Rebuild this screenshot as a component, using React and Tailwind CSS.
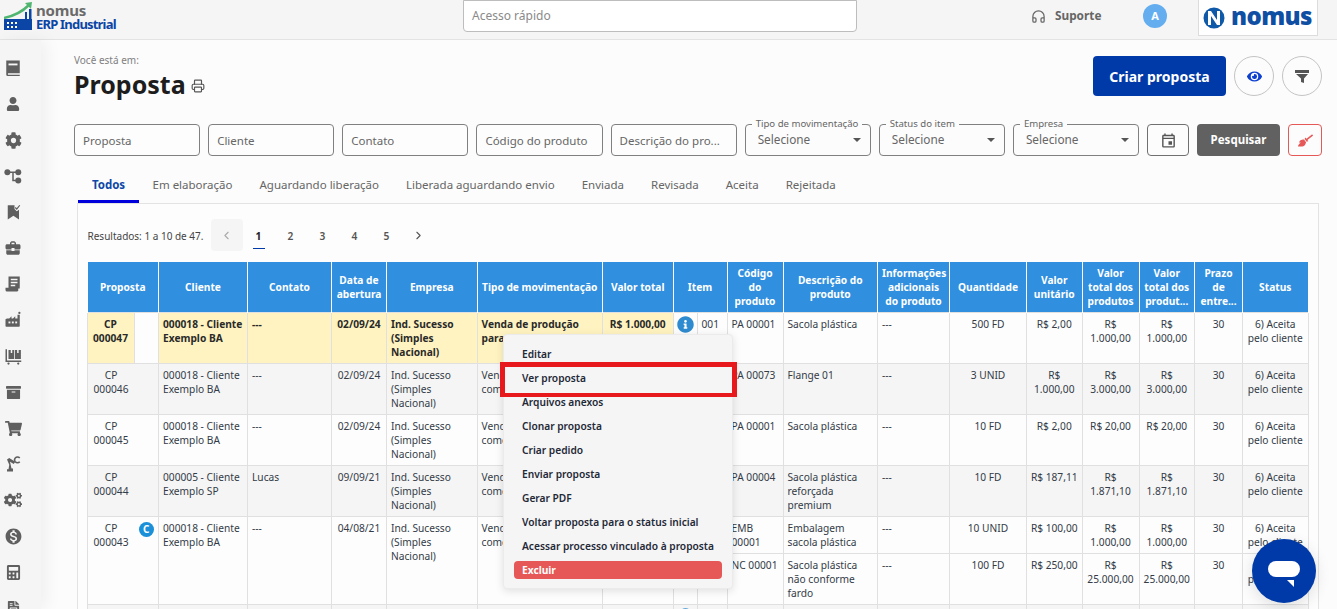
import React from "react";
import { Printer, Headphones, ChevronLeft, ChevronRight } from "lucide-react";
import { FaUser, FaCog, FaArchive, FaShoppingCart, FaCogs, FaCalculator, FaEye, FaBroom, FaInfoCircle, FaFileInvoice } from "react-icons/fa";
import { MdBusinessCenter, MdMonetizationOn, MdOutlineEvent } from "react-icons/md";

const S = ({ children, w = 18 }) => (
  <svg width={w} height={w} viewBox="0 0 24 24" fill="currentColor">{children}</svg>
);

const sideIcons = [
  <S key="book"><path d="M3 2h18v17H5.500a1.500 1.500 0 0 0 0 2H21v1.500H5a2 2 0 0 1-2-2z" /><rect x="6" y="6" width="12" height="2.500" fill="#f5f5f5" /></S>,
  <FaUser key="u" size={14} />,
  <FaCog key="c" size={17} />,
  <S key="flow"><circle cx="4.500" cy="7" r="4" /><circle cx="19" cy="7" r="4" /><circle cx="19" cy="18" r="4" /><path d="M5 6h14v2h-6v9h6v2h-8V8H5z" /></S>,
  <S key="mark"><path d="M5 3h9v5l3 3 3-2v13l-7.500-5L5 22z" /><path d="M15 6l2 2 4-5" fill="none" stroke="currentColor" strokeWidth="1.600" /></S>,
  <MdBusinessCenter key="b" size={18} />,
  <S key="sheet"><path d="M6 2h15v16h-2v3a2 2 0 0 1-2 1H4a2 2 0 0 1-2-2v-3h4zM9 5v2h9V5zm0 4v2h9V9zm0 4v2h6v-2z" fillRule="evenodd" /></S>,
  <S key="fact"><path d="M2 11l2-1h3l3-3v3h2l3-3v3h3V5h3v15a1 1 0 0 1-1 1H3a1 1 0 0 1-1-1z" /><circle cx="20.500" cy="2.500" r="1.500" /><rect x="6" y="14" width="2.500" height="2.500" fill="#f5f5f5" /><rect x="10.500" y="14" width="2.500" height="2.500" fill="#f5f5f5" /><rect x="15" y="14" width="2.500" height="2.500" fill="#f5f5f5" /></S>,
  <S key="pal"><path d="M2 3h2v15h19v2H2z" /><rect x="6" y="4" width="7.500" height="12" /><rect x="14.500" y="4" width="8" height="12" /><circle cx="6" cy="22" r="1.500" /><circle cx="19" cy="22" r="1.500" /><rect x="9" y="4" width="2" height="4" fill="#f5f5f5" /><rect x="17.500" y="4" width="2" height="4" fill="#f5f5f5" /></S>,
  <FaArchive key="a" size={15} />,
  <FaShoppingCart key="sc" size={17} />,
  <S key="rob"><path d="M4 22v-3h2l1-6-3-7 3-2 8 5-2 3-5-3 2 9h2v4z" /><path d="M21 4a4 4 0 0 0-6 0 4 4 0 0 0 0 5 4 4 0 0 0 6 0" fill="none" stroke="currentColor" strokeWidth="2" /></S>,
  <FaCogs key="cs" size={18} />,
  <MdMonetizationOn key="m" size={19} />,
  <FaCalculator key="ca" size={15} />,
  <FaFileInvoice key="fi" size={15} />,
];

const cols = [71.5, 89, 84, 55, 90.5, 125.5, 70.5, 24, 30, 56, 94.5, 72, 77, 55.5, 57, 55.5, 48, 65.5];

const heads = [
  ["Proposta"], ["Cliente"], ["Contato"], ["Data de abertura"], ["Empresa"], ["Tipo de movimentação"], ["Valor total"],
  ["Item", 2], ["Código do produto"], ["Descrição do produto"], ["Informações adicionais do produto"], ["Quantidade"],
  ["Valor unitário"], ["Valor total dos produtos"], ["Valor total dos produt..."], ["Prazo de entre..."], ["Status"],
];

const CLI = "000018 - Cliente Exemplo BA";
const EMP = "Ind. Sucesso (Simples Nacional)";
const TIPO = "Venda de produção comercial";
const ST = "6) Aceita pelo cliente";

const rows = [
  { id: "CP 000047", cli: CLI, con: "---", dt: "02/09/24", tipo: "Venda de produção para venda", tot: "R$ 1.000,00", bg: "bg-[#fff4c1]", strong: true,
    items: [["001", "PA 00001", "Sacola plástica", "500 FD", "R$ 2,00", "R$ 1.000,00", "R$ 1.000,00"]], info: true },
  { id: "CP 000046", cli: CLI, con: "---", dt: "02/09/24", tipo: TIPO, tot: "R$ 3.000,00", bg: "bg-[#f5f5f5]",
    items: [["001", "PA 00073", "Flange 01", "3 UNID", "R$ 1.000,00", "R$ 3.000,00", "R$ 3.000,00"]] },
  { id: "CP 000045", cli: CLI, con: "---", dt: "02/09/24", tipo: TIPO, tot: "R$ 20,00", bg: "bg-[#fdfdfd]",
    items: [["001", "PA 00001", "Sacola plástica", "10 FD", "R$ 2,00", "R$ 20,00", "R$ 20,00"]] },
  { id: "CP 000044", cli: "000005 - Cliente Exemplo SP", con: "Lucas", dt: "09/09/21", tipo: TIPO, tot: "R$ 1.871,10", bg: "bg-[#f5f5f5]",
    items: [["001", "PA 00004", "Sacola plástica reforçada premium", "10 FD", "R$ 187,11", "R$ 1.871,10", "R$ 1.871,10"]] },
  { id: "CP 000043", cli: CLI, con: "---", dt: "04/08/21", tipo: TIPO, tot: "R$ 26.000,00", bg: "bg-[#fdfdfd]", badge: true,
    items: [
      ["001", "EMB 00001", "Embalagem sacola plástica", "10 UNID", "R$ 100,00", "R$ 1.000,00", "R$ 1.000,00"],
      ["002", "NC 00001", "Sacola plástica não conforme fardo", "100 FD", "R$ 250,00", "R$ 25.000,00", "R$ 25.000,00"],
    ] },
  { id: "CP 000042", cli: CLI, con: "---", dt: "04/08/21", tipo: TIPO, tot: "R$ 1.000,00", bg: "bg-[#f5f5f5]", info: true,
    items: [["001", "PA 00001", "Sacola plástica", "10 FD", "R$ 100,00", "R$ 1.000,00", "R$ 1.000,00"]] },
];

const cell = "border border-[#e0e0e0] align-top pt-[4px] pb-[3px] overflow-hidden";
const td = `${cell} pl-[4px] pr-[2px]`;
const tdc = `${cell} px-[5px]`;
const tdn = `${cell} px-[4px]`;
const tdw = `${cell} px-[2px]`;

function Row({ r }) {
  const fw = r.strong ? "font-bold text-[#2a2a2a]" : "";
  const span = r.items.length;
  const ib = r.strong ? "bg-[#fdfdfd]" : r.bg;
  const itemCells = (it, k) => (
    <React.Fragment key={k}>
      <td className={`border border-[#e0e0e0] align-top text-center pt-[3px] px-0 ${ib}`}>
        {r.info && k === 0 && <FaInfoCircle size={17} className="inline text-[#2e8bcf]" />}
      </td>
      <td className={`${tdn} ${ib}`}>{it[0]}</td>
      <td className={`${tdn} ${ib}`}>{it[1]}</td>
      <td className={`${tdn} ${ib}`}>{it[2]}</td>
      <td className={`${tdn} ${ib}`}>---</td>
      <td className={`${tdc} ${ib} text-center`}>{it[3]}</td>
      <td className={`${tdw} ${ib} text-center`}>{it[4]}</td>
      <td className={`${tdw} ${ib} text-center`}>{it[5]}</td>
      <td className={`${tdw} ${ib} text-center`}>{it[6]}</td>
      <td className={`${tdc} ${ib} text-center`}>30</td>
      <td className={`${tdw} ${ib} text-center`}>{ST}</td>
    </React.Fragment>
  );
  return (
    <>
      <tr className={r.items.length > 1 ? "h-[37px]" : "h-[51px]"}>
        <td rowSpan={span} className={`border border-[#e0e0e0] align-top p-0 ${ib} ${fw}`}>
          <div className="flex">
            <div className={`w-[47px] shrink-0 text-center pt-[4px] h-[50px] ${r.strong ? `${r.bg} border-r border-[#e0e0e0]` : ""}`}>{r.id}</div>
            {r.badge && (
              <div className="flex-1 flex justify-center pt-[5px]">
                <span className="w-[15px] h-[15px] rounded-full bg-[#1b8fd8] text-white font-bold text-[10px] leading-[15px] text-center">C</span>
              </div>
            )}
          </div>
        </td>
        <td rowSpan={span} className={`${td} ${r.bg} ${fw}`}>{r.cli}</td>
        <td rowSpan={span} className={`${td} ${r.bg} ${fw}`}>{r.con}</td>
        <td rowSpan={span} className={`${tdc} ${r.bg} ${fw} text-center`}>{r.dt}</td>
        <td rowSpan={span} className={`${tdn} ${r.bg} ${fw}`}>{EMP}</td>
        <td rowSpan={span} className={`${tdn} ${r.bg} ${fw}`}>{r.tipo}</td>
        <td rowSpan={span} className={`${tdw} ${r.bg} ${fw} text-center`}>{r.tot}</td>
        {itemCells(r.items[0], 0)}
      </tr>
      {r.items.slice(1).map((it, i) => (
        <tr key={i} className="h-[51px]">{itemCells(it, i + 1)}</tr>
      ))}
    </>
  );
}

const TextField = ({ label }) => (
  <div className="w-[126.125px] h-[32px] shrink-0 border border-[#808080] rounded-[4px] bg-[#fdfdfd] flex items-center px-[8px] pt-[1px] text-[11.500px] text-[#666] whitespace-nowrap overflow-hidden">
    {label}
  </div>
);

const SelectField = ({ label }) => (
  <div className="relative w-[126.125px] h-[32px] shrink-0 border border-[#808080] rounded-[4px] flex items-center pl-[12px] pr-[8px] text-[11.800px] text-[#666]">
    <span className="absolute left-[6px] -top-[7px] bg-[#fcfcfc] px-[4px] text-[9.600px] leading-[12px] whitespace-nowrap text-[#666]">{label}</span>
    <span className="flex-1 -mt-[1px]">Selecione</span>
    <span className="w-0 h-0 border-x-[4px] border-x-transparent border-t-[4px] border-t-[#555] mr-[1px]" />
  </div>
);

const tabs = ["Em elaboração", "Aguardando liberação", "Liberada aguardando envio", "Enviada", "Revisada", "Aceita", "Rejeitada"];

const menu = ["Editar", "Ver proposta", "Arquivos anexos", "Clonar proposta", "Criar pedido", "Enviar proposta", "Gerar PDF", "Voltar proposta para o status inicial", "Acessar processo vinculado à proposta"];

export default function App() {
  return (
    <div className="relative h-[609px] w-[1337px] overflow-hidden bg-[#fcfcfc] font-['Open_Sans',sans-serif] text-[#333b47]">
      <header className="h-[40px] flex items-start bg-[#f5f5f5] border-b border-[#e3e3e3]">
        <div className="w-[463px] h-[39px] flex items-start pl-[4px] pt-[2px]">
          <svg width="28" height="28" viewBox="0 0 28 28" className="shrink-0">
            <path d="M0 17h28v11H0z" fill="#0b45a5" />
            <path d="M21 10h2v8h-2zM25 7h2.500v11H25z" fill="#0b45a5" />
            <path d="M0 16C10 14 18 10 25 3" fill="none" stroke="#4fb56f" strokeWidth="2.500" />
            <path d="M21 1l7-1-1 7z" fill="#4fb56f" />
            <g fill="#fff"><rect x="3" y="20" width="2" height="2" /><rect x="7" y="20" width="2" height="2" /><rect x="11" y="20" width="2" height="2" /><rect x="3" y="24" width="2" height="2" /><rect x="7" y="24" width="2" height="2" /><rect x="11" y="24" width="2" height="2" /></g>
          </svg>
          <div className="ml-[4px] leading-none">
            <div className="text-[15px] leading-[13px] pt-[2px] font-bold text-[#6a6a6a] tracking-[-0.2px]">nomus</div>
            <div className="text-[13px] leading-[15px] font-bold text-[#0b45a5] tracking-[-0.8px] whitespace-nowrap">ERP Industrial</div>
          </div>
        </div>
        <div className="w-[394px] h-[32px] bg-white border border-[#bdbdbd] rounded-b-[4px] flex items-center px-[8px] text-[12px] text-[#8a8a8a]">Acesso rápido</div>
        <div className="ml-[174px] w-[71px] h-[32px] flex items-center text-[#666]">
          <Headphones size={15} strokeWidth={2} />
          <span className="ml-[9px] text-[11.800px] font-bold">Suporte</span>
        </div>
        <div className="ml-[41px] mt-[4px] w-[24px] h-[24px] rounded-full bg-[#64aef0] text-white text-[11px] font-bold flex items-center justify-center">A</div>
        <div className="ml-[31px] w-[120px] h-[36px] bg-white border border-[#dcdcdc] border-t-0 flex items-center pl-[4px]">
          <svg width="22" height="22" viewBox="0 0 22 22" className="shrink-0">
            <circle cx="11" cy="11" r="10.500" fill="#0f5aa8" />
            <path d="M5 18V4h3l6 9V4h3v14h-3L8 9v9z" fill="#fff" />
          </svg>
          <span className="ml-[6px] text-[24px] leading-[24px] font-black font-['Inter',sans-serif] text-[#0f4fa3] tracking-[-0.6px] -mt-[4px]">nomus</span>
        </div>
      </header>

      <div className="flex h-[569px]">
        <aside className="w-[41px] shrink-0 bg-[#f5f5f5] pt-[10px] text-[#5f5f5f] shadow-[6px_0_16px_rgba(0,0,0,0.05)]">
          {sideIcons.map((ic, i) => (
            <div key={i} className="h-[36px] w-[26px] flex items-center justify-center">{ic}</div>
          ))}
        </aside>

        <main className="flex-1 min-w-0 pl-[33px] pr-[15px]">
          <div className="h-[84px] flex justify-between">
            <div className="pt-[14px]">
              <div className="text-[10px] leading-[12px] text-[#808080]">Você está em:</div>
              <div className="flex items-center mt-[3px]">
                <h1 className="text-[25px] leading-[30px] font-bold text-[#1d1d1d]">Proposta</h1>
                <Printer size={14} className="ml-[5px] mt-[4px] text-[#555]" />
              </div>
            </div>
            <div className="pt-[16px] flex gap-2">
              <button className="w-[133px] h-[40px] bg-[#003aa8] rounded-[4px] text-white font-bold text-[14px]">Criar proposta</button>
              <button className="w-[40px] h-[40px] rounded-full border border-[#c4c4c4] flex items-center justify-center text-[#0d3fd0]"><FaEye size={15} /></button>
              <button className="w-[40px] h-[40px] rounded-full border border-[#c4c4c4] flex items-center justify-center text-[#555]">
                <svg width="14" height="14" viewBox="0 0 14 14" fill="currentColor"><path d="M0 1h14v3H0zM1 5h12L9 9.500V14l-3-1V9.500z" /></svg>
              </button>
            </div>
          </div>

          <div className="flex gap-2 h-[32px]">
            <TextField label="Proposta" />
            <TextField label="Cliente" />
            <TextField label="Contato" />
            <TextField label="Código do produto" />
            <TextField label="Descrição do pro..." />
            <SelectField label="Tipo de movimentação" />
            <SelectField label="Status do item" />
            <SelectField label="Empresa" />
            <button className="w-[42px] h-[32px] border border-[#707070] rounded-[4px] flex items-center justify-center text-[#555]"><MdOutlineEvent size={17} /></button>
            <button className="w-[83px] h-[32px] bg-[#616161] rounded-[4px] text-white font-bold text-[11.500px]">Pesquisar</button>
            <button className="w-[34px] h-[32px] border border-[#e65757] rounded-[4px] flex items-center justify-center text-[#e65757]"><FaBroom size={15} /></button>
          </div>

          <nav className="mt-[11px] ml-[4px] h-[36px] flex text-[11.500px] text-[#666]">
            <div className="h-[36px] w-[61px] flex items-center justify-center font-bold text-[#0d47a8] border-b-[3px] border-b-[#0000dd] pt-[3px]">Todos</div>
            {tabs.map((t, i) => (
              <div key={i} className="h-[36px] px-[13.500px] flex items-center whitespace-nowrap">{t}</div>
            ))}
          </nav>

          <section className="mx-[3px] h-[500px] border border-b-0 border-[#e3e3e3] bg-[#fdfdfd] pl-[8.500px] pr-[10px] pt-[15px] text-[10.200px] leading-[14px] overflow-hidden">
            <div className="h-[32px] flex items-center text-[#444]">
              <span className="w-[124px] pl-[1px] pt-[1px] text-[10px] whitespace-nowrap">Resultados: 1 a 10 de 47.</span>
              <span className="w-[32px] h-[32px] rounded-[4px] bg-[#f5f5f5] flex items-center justify-center text-[#aaa]"><ChevronLeft size={13} /></span>
              <div className="flex font-semibold text-[#555]">
                <span className="relative w-[32px] h-[32px] pt-[1px] flex items-center justify-center font-bold text-[#222]">1<span className="absolute bottom-[2px] left-[10px] w-[12px] h-[1.500px] bg-[#003aa8]" /></span>
                {["2", "3", "4", "5"].map((n) => (
                  <span key={n} className="w-[32px] h-[32px] pt-[1px] flex items-center justify-center">{n}</span>
                ))}
                <span className="w-[32px] h-[32px] flex items-center justify-center"><ChevronRight size={13} /></span>
              </div>
            </div>

            <table className="mt-[11px] table-fixed border-collapse w-[1221px]">
              <colgroup>
                {cols.map((w, i) => <col key={i} style={{ width: w }} />)}
              </colgroup>
              <thead>
                <tr className="h-[50px]">
                  {heads.map(([h, span], i) => (
                    <th key={i} colSpan={span || 1} className="bg-[#318fdf] text-white font-bold text-center px-[4px] pt-[1px] border-x border-white overflow-hidden">{h}</th>
                  ))}
                </tr>
              </thead>
              <tbody>
                {rows.map((r) => <Row key={r.id} r={r} />)}
              </tbody>
            </table>
          </section>
        </main>
      </div>

      <div className="absolute left-[503px] top-[334px] w-[230px] h-[255px] bg-[#f5f5f5] rounded-[4px] border border-[#ebebeb] shadow-[0_2px_8px_rgba(0,0,0,0.12)] pt-[7.500px] text-[10.200px] font-semibold text-[#1f2937]">
        {menu.map((m) => (
          <div key={m} className="h-[24px] flex items-center pl-[18px] whitespace-nowrap">{m}</div>
        ))}
        <div className="mx-[10px] mt-[2.500px] h-[18px] rounded-[4px] bg-[#e65757] text-white font-bold flex items-center pl-[8px] pt-[1px]">Excluir</div>
      </div>

      <div className="absolute left-[500px] top-[362px] w-[237px] h-[35px] border-[5px] border-b-[4px] border-[#e8191c]" />

      <div className="absolute left-[1252px] top-[539px] w-[64px] h-[64px] rounded-full bg-[#003aa8] shadow-[0_4px_16px_rgba(0,0,0,0.12)]">
        <div className="absolute left-[16px] top-[22px] w-[32px] h-[16px] rounded-full bg-white" />
        <svg width="8" height="7" viewBox="0 0 8 7" className="absolute left-[35px] top-[41px]"><path d="M0 0h7v7z" fill="#fff" /></svg>
      </div>
    </div>
  );
}
